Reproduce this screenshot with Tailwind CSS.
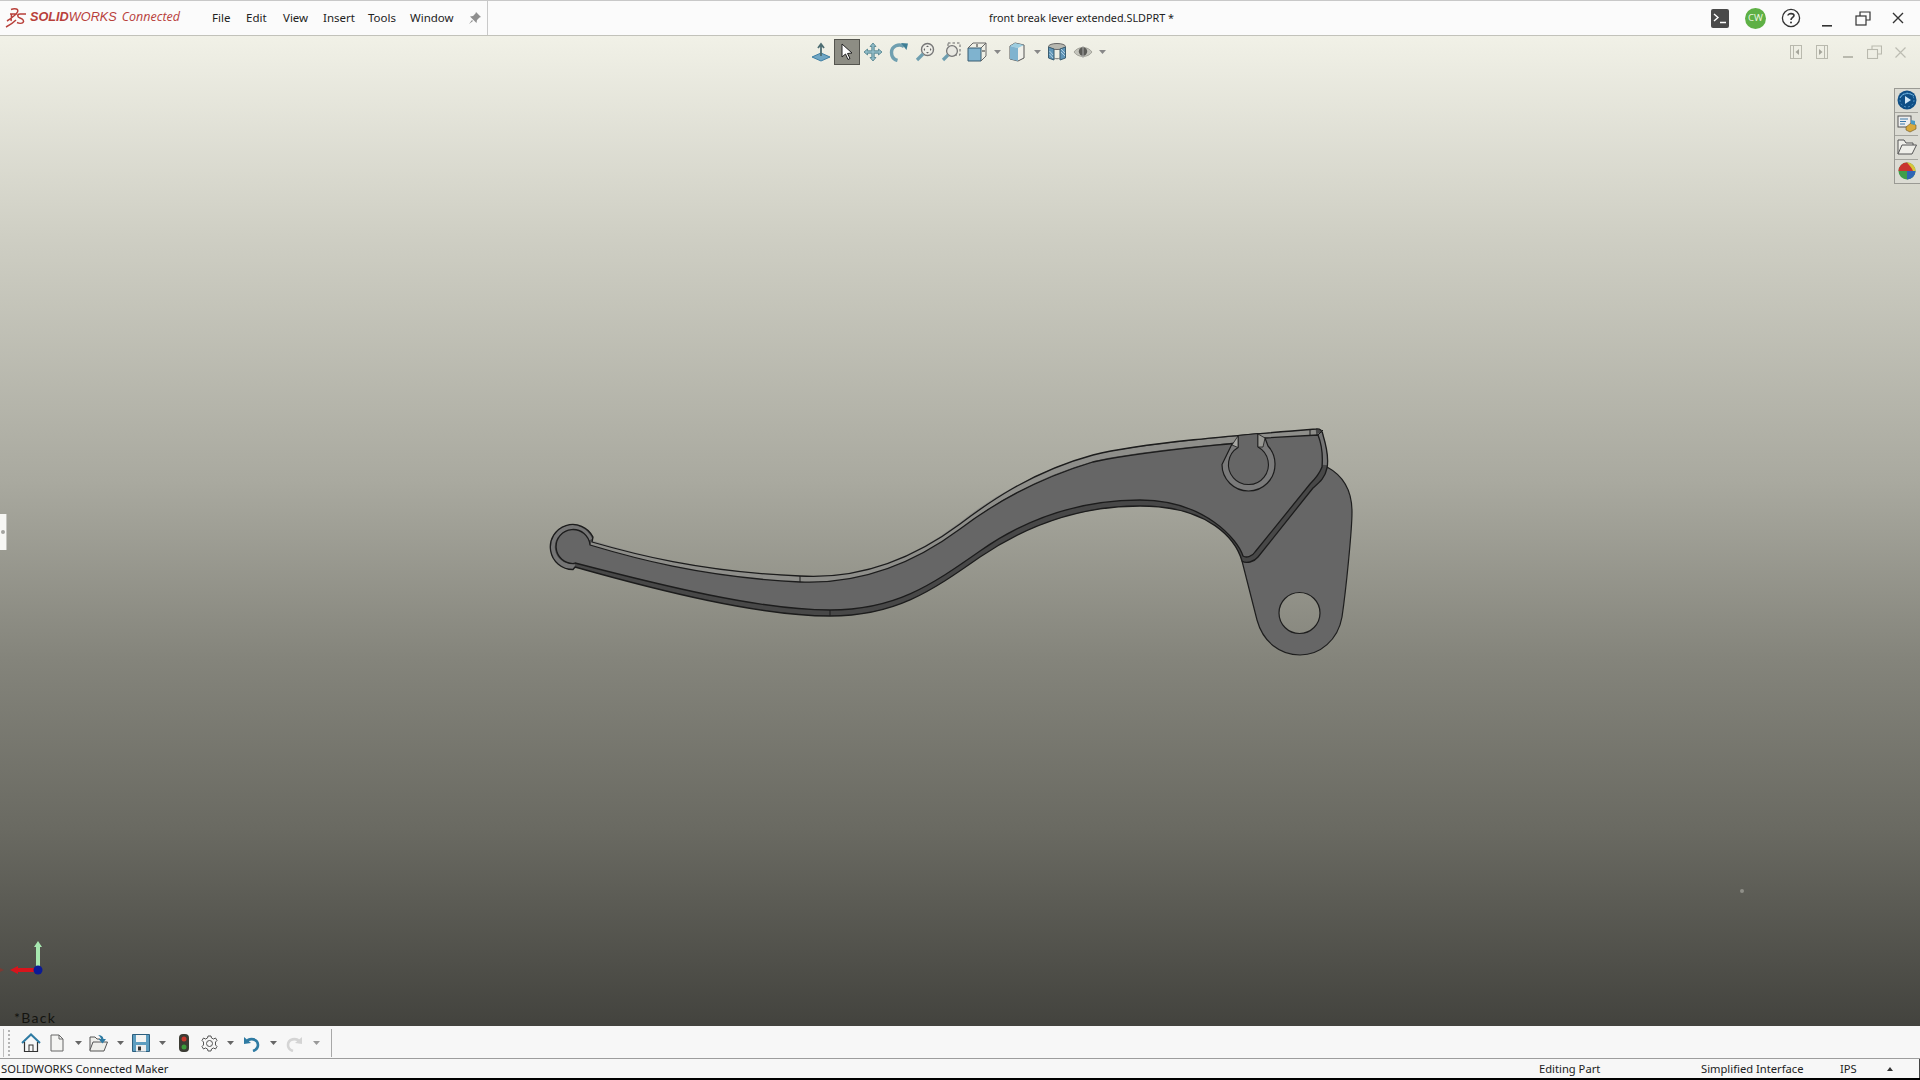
<!DOCTYPE html>
<html><head><meta charset="utf-8">
<script src="https://cdn.jsdelivr.net/npm/@tailwindcss/browser@4"></script>
</head>
<body class="bg-black overflow-hidden">
<div class="w-[1920px] h-[1080px] flex flex-col font-['Noto_Sans',sans-serif] text-[#222]">

<!-- title bar -->
<header class="h-[36px] shrink-0 relative flex items-center bg-[#fbfbfb] border-t border-t-[#c8c8c8] border-b border-b-[#c2c2ba]">
  <svg class="w-[22px] h-[22px] ml-[5px] shrink-0" viewBox="0 0 22 22" fill="none" stroke="#b8403a" stroke-width="1.5"><path d="M6 2.5 C10 1 14 2 12.5 5 C11.5 7 9 9.5 2 14 M5 7 L12 7 M6.5 7 C6.5 10 6.5 12 6 14 M1 20 C5 18 8 16 11 13 M21 7 L15 7 C12 7 12 10 15 11 C18 12 19.5 14 18 15.5 C17 16.5 14 16.5 12 15.5"/></svg>
  <div class="ml-[3px] w-[155px] shrink-0 text-[12.7px] italic text-[#b8403a] whitespace-nowrap font-['Liberation_Sans',sans-serif]"><span class="font-bold">SOLID</span><span>WORKS</span><span class="ml-[5px] font-['Open_Sans',sans-serif] text-[12.5px]">Connected</span></div>
  <nav class="flex text-[11.5px] text-[#222] ml-[27px] gap-[16px]">
    <span class="w-[18px]">File</span><span class="w-[21px]">Edit</span><span class="w-[24px]">View</span><span class="w-[29px]">Insert</span><span class="w-[26px]">Tools</span><span class="w-[44px]">Window</span>
  </nav>
  <svg class="w-[14px] h-[14px] ml-[14px] shrink-0" viewBox="0 0 14 14" fill="#8f8f8f"><path d="M8 1 L13 6 L11.5 6.5 L9 9 L8.5 12 L2 5.5 L5 5 L7.5 2.5 Z M4 9 L1 13 L5 10 Z"/></svg>
  <div class="w-px self-stretch ml-[5px] bg-[#c9c9c9]"></div>
  <div class="absolute left-0 right-0 top-0 bottom-0 flex items-center justify-center pointer-events-none pl-[243px] text-[10.8px]">front break lever extended.SLDPRT *</div>
  <div class="ml-auto flex items-center h-full relative">
    <div class="w-[18px] h-[19px] rounded-[2px] bg-[#4a4a4a] flex items-center justify-center">
      <svg class="w-[14px] h-[12px]" viewBox="0 0 14 12" fill="none" stroke="#fff" stroke-width="1.4"><path d="M1 2 L5 5.5 L1 9 M7 10.5 L13 10.5"/></svg>
    </div>
    <div class="ml-[16px] w-[21px] h-[21px] rounded-full bg-[#5eb045] flex items-center justify-center text-[9.5px] text-[#e6f5df]">CW</div>
    <svg class="ml-[15px] w-[20px] h-[20px]" viewBox="0 0 20 20" fill="none" stroke="#333" stroke-width="1.3"><circle cx="10" cy="10" r="8.6"/><path d="M7 7.5 C7 5 13 5 13 7.6 C13 9.5 10 9.5 10 12" stroke-width="1.6"/><circle cx="10" cy="14.6" r="1" fill="#333" stroke="none"/></svg>
    <svg class="ml-[20px] w-[12px] h-[12px] mt-[8px]" viewBox="0 0 12 12"><rect x="1" y="9" width="10" height="1.6" fill="#333"/></svg>
    <svg class="ml-[22px] w-[16px] h-[15px]" viewBox="0 0 16 15" fill="none" stroke="#333" stroke-width="1.2"><path d="M5 5 V1 H15 V9 H11"/><rect x="1" y="5" width="10" height="9"/></svg>
    <svg class="ml-[21px] mr-[16px] w-[12px] h-[12px]" viewBox="0 0 12 12" stroke="#333" stroke-width="1.4"><path d="M1 1 L11 11 M11 1 L1 11"/></svg>
  </div>
</header>

<!-- graphics area -->
<main class="flex-1 relative overflow-hidden bg-[linear-gradient(to_bottom,#f1f1e7_0%,#cfcfc4_20%,#a9a99f_45%,#84847b_63%,#6a6a62_80%,#43433e_100%)]">

  <!-- lever -->
  <svg class="absolute inset-0 w-full h-full" viewBox="0 36 1920 990" fill="none" stroke-linejoin="round">
    <!-- lug -->
    <path fill="#666666" fill-rule="evenodd" stroke="#1e1e1e" stroke-width="1.2" d="M1327 467 C1342 475 1352 490 1352 512 C1352 530 1346 590 1342 617 C1338 640 1320 655 1300 655 C1280 655 1263 642 1257 620 L1242 561 L1300 500 Z M1320 613 A20.5 20.5 0 1 0 1279 613 A20.5 20.5 0 1 0 1320 613 Z"/>
    <!-- body outer -->
    <path fill="#484848" d="M592 542 C630 553 700 572 800 576 C850 579 905 565 960 524 C985 505 1030 472 1093 455 C1140 443 1240 435 1316 429 Q1322 428 1323 435 C1326 445 1329 458 1327 468 C1325 478 1320 482 1313 488 L1258 557 C1254 562 1246 564 1242 561 C1236 540 1210 506 1140 506 C1085 506 1030 523 980 557 C930 592 895 616 830 616 C760 616 660 591 575 567 L573 569.5 A22.5 22.5 0 1 1 593 537 Z"/>
    <!-- bevel bands -->
    <path stroke="#8e8e8a" stroke-width="6" d="M591 543 C630 555 700 575 800 579 C850 581 905 568 960 526 C985 506 1030 476 1093 458 C1140 447 1240 439 1316 432"/>
    <path stroke="#757575" stroke-width="5" d="M1320 433 C1323 445 1326 455 1325 465"/>
    <path stroke="#757575" stroke-width="5" d="M575 566 L573 566.5 A19.5 19.5 0 1 1 590 540"/>
    <!-- outer stroke -->
    <path stroke="#1c1c1c" stroke-width="1.3" d="M592 542 C630 553 700 572 800 576 C850 579 905 565 960 524 C985 505 1030 472 1093 455 C1140 443 1240 435 1316 429 Q1322 428 1323 435 C1326 445 1329 458 1327 468 C1325 478 1320 482 1313 488 L1258 557 C1254 562 1246 564 1242 561 C1236 540 1210 506 1140 506 C1085 506 1030 523 980 557 C930 592 895 616 830 616 C760 616 660 591 575 567 L573 569.5 A22.5 22.5 0 1 1 593 537 Z"/>
    <!-- face -->
    <path fill="#666666" stroke="#1c1c1c" stroke-width="1.3" d="M590 545 C630 557 700 577 800 582 C850 584 905 570 960 529 C985 510 1030 481 1093 462 C1140 452 1200 447 1237 443 L1232 445 L1265 438 L1318 435 C1322 445 1323 455 1322 467 C1319 475 1315 479 1310 484 L1255 552 C1252 557 1246 558 1243 556 C1238 540 1205 500 1140 500 C1085 500 1030 516 980 551 C930 586 895 610 830 610 C760 610 660 585 575 563 L574 563.5 A17 17 0 1 1 590 545 Z"/>
    <!-- keyhole -->
    <path fill="#7a7a7a" stroke="#1c1c1c" stroke-width="1.2" d="M1222 464.5 A26.5 26.5 0 0 0 1275 464.5 A26.5 26.5 0 0 0 1268 446 L1265 438 L1232 444 Z"/>
    <path fill="#666666" stroke="#1c1c1c" stroke-width="1.1" d="M1238 447.5 A20 20 0 1 0 1258 447 L1258 433.5 L1238 435.5 Z"/>
    <path fill="#a8a8a4" stroke="#1c1c1c" stroke-width="0.8" d="M1238 436 L1232 445 L1238 447.5 Z"/>
    <path fill="#999994" stroke="#1c1c1c" stroke-width="0.8" d="M1258 434 L1265 438 L1263 447 L1258 447 Z"/>
    <!-- seams -->
    <path stroke="#1c1c1c" stroke-width="1" d="M800 576 V582 M830 610 V616 M1310 430 V435 M1318 435 L1323 430"/>
  </svg>

  <!-- heads-up toolbar -->
  <div class="absolute left-[808px] top-[3px] h-[26px] flex items-center">
    <div class="w-[26px] h-[26px] flex items-center justify-center"><svg class="w-[20px] h-[20px]" viewBox="0 0 20 20"><path d="M1 15 L10 11 L19 15 L10 19 Z" fill="#6fa6c4" stroke="#3f7fa3"/><path d="M10 14 V3 M7 6 L10 2 L13 6" fill="none" stroke="#4d6d72" stroke-width="1.8"/></svg></div>
    <div class="w-[26px] h-[26px] bg-[#8d8d84] border border-[#55554f] flex items-center justify-center"><svg class="w-[16px] h-[18px]" viewBox="0 0 16 18"><path d="M3 1 V14 L6.5 11 L9 16.5 L11 15.500 L8.500 10.500 L13 10 Z" fill="#fff" stroke="#222" stroke-width="1"/></svg></div>
    <div class="w-[26px] h-[26px] flex items-center justify-center"><svg class="w-[20px] h-[20px]" viewBox="0 0 20 20" fill="#8fbac6" stroke="#4a7d8a" stroke-width="0.8"><path d="M10 1 L13 4.5 H11.2 V8.8 H15.5 V7 L19 10 L15.5 13 V11.2 H11.2 V15.5 H13 L10 19 L7 15.5 H8.8 V11.2 H4.5 V13 L1 10 L4.5 7 V8.8 H8.8 V4.5 H7 Z"/></svg></div>
    <div class="w-[25px] h-[26px] flex items-center justify-center"><svg class="w-[20px] h-[20px]" viewBox="0 0 20 20" fill="none"><path d="M15 4.5 C10 1 2.5 4 2.5 10.5 C2.5 14.5 5 17.5 8.5 18.5" stroke="#6f9fb0" stroke-width="3.4"/><path d="M12 1 L19 1.5 L17.5 8 Z" fill="#3f7f96"/></svg></div>
    <div class="w-[27px] h-[26px] flex items-center justify-center"><svg class="w-[20px] h-[20px]" viewBox="0 0 20 20" fill="none"><circle cx="12.5" cy="7.5" r="6" stroke="#777" stroke-width="1.4" fill="#efefe8"/><path d="M8 12 L2 18" stroke="#6f9fb0" stroke-width="3.2"/><path d="M12.5 3.5 L11 5 H14 Z M12.5 11.5 L11 10 H14 Z M8.5 7.5 L10 6 V9 Z M16.5 7.5 L15 6 V9 Z" fill="#666"/></svg></div>
    <div class="w-[26px] h-[26px] flex items-center justify-center"><svg class="w-[20px] h-[20px]" viewBox="0 0 20 20" fill="none"><rect x="7" y="1" width="12" height="12" stroke="#666" stroke-dasharray="2.5 2"/><circle cx="11" cy="9" r="5.4" stroke="#777" stroke-width="1.3" fill="#e9e9e2"/><path d="M7 13 L2 18" stroke="#6f9fb0" stroke-width="3.2"/></svg></div>
    <div class="w-[26px] h-[26px] flex items-center justify-center"><svg class="w-[20px] h-[20px]" viewBox="0 0 20 20"><path d="M1 6 H14 V19 H1 Z" fill="#7fb3cf" stroke="#3b5d70"/><path d="M1 6 L6 1 H19 V14 L14 19 M14 6 L19 1" fill="none" stroke="#666"/><path d="M10 2 V5 M15 9 H18" stroke="#333"/></svg></div>
    <div class="w-[14px] h-[26px] flex items-center justify-center"><svg class="w-[7px] h-[4px]" viewBox="0 0 7 4"><path d="M0 0 H7 L3.5 4 Z" fill="#888"/></svg></div>
    <div class="w-[26px] h-[26px] flex items-center justify-center"><svg class="w-[18px] h-[20px]" viewBox="0 0 18 20"><path d="M2 4 L7 1 L16 3 V16 L10 19 L2 17 Z" fill="#f0f0ea" stroke="#555"/><path d="M2 4 L7 1 L16 3 L10 6 Z" fill="#9ccde0"/><path d="M2 4 L10 6 V19 L2 17 Z" fill="#7fb3cf"/></svg></div>
    <div class="w-[14px] h-[26px] flex items-center justify-center"><svg class="w-[7px] h-[4px]" viewBox="0 0 7 4"><path d="M0 0 H7 L3.5 4 Z" fill="#888"/></svg></div>
    <div class="w-[26px] h-[26px] flex items-center justify-center"><svg class="w-[20px] h-[20px]" viewBox="0 0 20 20"><ellipse cx="10" cy="4.500" rx="8.500" ry="3" fill="#b8b8b0" stroke="#666"/><path d="M1.500 5 L7 7 V18 L1.500 16 Z M18.500 5 L13 7 V18 L18.500 16 Z" fill="#5f95b8" stroke="#3b5d70"/><path d="M2.500 9 L6 13 M2.500 12 L6 16 M14 10 L18 14 M14 7 L18 11" stroke="#c7dce8" stroke-width=".8"/><path d="M7 16 C9 17 11 17 13 16" stroke="#777" fill="none"/></svg></div>
    <div class="w-[26px] h-[26px] flex items-center justify-center"><svg class="w-[20px] h-[18px]" viewBox="0 0 20 18"><path d="M1 9 C5 3 15 3 19 9 C15 15 5 15 1 9 Z" fill="#c4c4bc" stroke="#a5a59c"/><circle cx="10" cy="8.500" r="4.200" fill="#5c5c58"/><path d="M10 3 V15" stroke="#aaa" stroke-width="1"/></svg></div>
    <div class="w-[12px] h-[26px] flex items-center justify-center"><svg class="w-[7px] h-[4px]" viewBox="0 0 7 4"><path d="M0 0 H7 L3.5 4 Z" fill="#888"/></svg></div>
  </div>

  <!-- document window controls -->
  <div class="absolute left-[1790px] top-[9px] flex items-center">
    <svg class="w-[12px] h-[14px]" viewBox="0 0 12 14" fill="none" stroke="#b9b9ae" stroke-width="1"><rect x=".5" y=".5" width="11" height="13"/><path d="M3.5 .5 V13.5" /><path d="M9 4 L5.5 7 L9 10 Z" fill="#a5a59b" stroke="none"/></svg>
    <svg class="ml-[14px] w-[12px] h-[14px]" viewBox="0 0 12 14" fill="none" stroke="#b9b9ae" stroke-width="1"><rect x=".5" y=".5" width="11" height="13"/><path d="M8.5 .5 V13.5"/><path d="M3 4 L6.5 7 L3 10 Z" fill="#a5a59b" stroke="none"/></svg>
    <svg class="ml-[15px] w-[10px] h-[14px]" viewBox="0 0 10 14"><rect y="11" width="10" height="2" fill="#b9b9ae"/></svg>
    <svg class="ml-[14px] w-[15px] h-[14px]" viewBox="0 0 15 14" fill="none" stroke="#b9b9ae" stroke-width="1.1"><path d="M5 4 V1 H14.500 V9 H10"/><rect x=".5" y="4.500" width="10" height="9"/></svg>
    <svg class="ml-[13px] w-[11px] h-[11px]" viewBox="0 0 11 11" stroke="#bcbcb2" stroke-width="1.2"><path d="M.5 .5 L10.500 10.500 M10.500 .5 L.5 10.500"/></svg>
  </div>

  <!-- task pane tabs -->
  <div class="absolute right-0 top-[52px] w-[26px] pr-[2px] flex flex-col border border-r-0 border-[#9a9a94] divide-y divide-[#a5a59e] bg-[#dcdcd4]">
    <div class="h-[23.5px] flex items-center justify-center"><svg class="w-[20px] h-[20px]" viewBox="0 0 20 20"><circle cx="10" cy="10" r="9.500" fill="#0f4f86"/><circle cx="10" cy="10" r="7" fill="none" stroke="#5fa5d4" stroke-width=".8" stroke-dasharray="2 2"/><path d="M8 6 L14 10 L8 14 Z" fill="#cfe6f5"/><path d="M3 8 C5 3 13 2 17 6" stroke="#6db0dc" fill="none"/></svg></div>
    <div class="h-[23.5px] flex items-center justify-center"><svg class="w-[20px] h-[18px]" viewBox="0 0 20 18"><rect x="1" y="1" width="13" height="11" fill="#eee" stroke="#555"/><path d="M3 4 H11 M3 6.500 H9 M3 9 H8" stroke="#3a78a8"/><path d="M9 12 L14 8 L19 10 L19 14 L13 17 L9 15 Z" fill="#d8a93c" stroke="#6b5520" stroke-width=".6"/><path d="M14 5 L18 6 V10 L14 9 Z" fill="#4a9bc4"/></svg></div>
    <div class="h-[23.5px] flex items-center justify-center"><svg class="w-[20px] h-[18px]" viewBox="0 0 20 18" fill="#efefe9" stroke="#555" stroke-width="1"><path d="M1 16 V2 H7 L9 5 H16 V7"/><path d="M1 16 L5 7 H19.500 L15 16 Z"/></svg></div>
    <div class="h-[23.5px] flex items-center justify-center"><svg class="w-[18px] h-[18px]" viewBox="0 0 18 18"><circle cx="9" cy="9" r="8.500" fill="#3f9e4a"/><path d="M9 .5 A8.500 8.500 0 0 1 17.500 9 H9 Z" fill="#d8c53a"/><path d="M.5 9 A8.500 8.500 0 0 1 9 .5 C12 4 14 6 15 9 Z" fill="#c9342f"/><path d="M9 9 H17.500 A8.500 8.500 0 0 1 9 17.500 Z" fill="#2f65b5"/></svg></div>
  </div>

  <!-- left splitter handle -->
  <div class="absolute left-0 top-[478px] w-[7px] h-[36px] bg-[#f7f7f4] border-r border-[#c5c5bf] flex items-center justify-center"><span class="w-[4px] h-[4px] rounded-full bg-[#a5a5a0]"></span></div>

  <!-- stray cursor dot -->
  <span class="absolute left-[1740px] top-[853px] w-[4px] h-[4px] rounded-full bg-[#8f8f88]"></span>

  <!-- triad -->
  <svg class="absolute left-0 top-[902px] w-[50px] h-[42px]" viewBox="0 0 50 42">
    <path d="M36 34 V9 H34 L38 3 L42 9 H40 V34 Z" fill="#a7e8b0"/>
    <path d="M38 30 H18 V28 L10 32 L18 36 V34 H38 Z" fill="#d8141c"/>
    <path d="M0 30 L4 32 L0 34 Z" fill="#7d3a33"/>
    <circle cx="38" cy="32" r="4.500" fill="#0b1a96"/>
  </svg>

  <div class="absolute left-[14px] top-[973px] text-[14px] tracking-[1.3px] text-[#141410] font-['Lato',sans-serif] leading-[18px]">*Back</div>
</main>

<!-- bottom toolbar -->
<div class="h-[33px] shrink-0 bg-[#f7f7f7] flex items-center border-b border-[#9d9d9d] pt-[2px]">
  <div class="w-px h-[28px] ml-[3px] bg-[#bdbdbd]"></div>
  <div class="w-[3px] h-[26px] ml-[4px] border-l-2 border-dotted border-[#b5b5b5]"></div>
  <svg class="ml-[10px] w-[20px] h-[20px]" viewBox="0 0 20 20" fill="none"><path d="M1 10 L10 1.500 L19 10" stroke="#2f7ba3" stroke-width="2"/><path d="M3.500 9 V18.500 H16.500 V9" stroke="#333" stroke-width="1.2"/><rect x="8" y="12" width="4" height="6.500" stroke="#333"/></svg>
  <svg class="ml-[9px] w-[14px] h-[18px]" viewBox="0 0 14 18" fill="#f4f4f2" stroke="#666"><path d="M1 1 H9 L13 5 V17 H1 Z"/><path d="M9 1 V5 H13" fill="none"/></svg>
  <div class="ml-[11px] w-[7px]"><svg class="w-[7px] h-[4px]" viewBox="0 0 7 4"><path d="M0 0 H7 L3.500 4 Z" fill="#666"/></svg></div>
  <svg class="ml-[7px] w-[20px] h-[18px]" viewBox="0 0 20 18" fill="#eeeeea" stroke="#555"><path d="M1 16 V3 H6 L8 5 H11"/><path d="M1 16 L4 8 H18.500 L15 17 H1 Z"/><path d="M9 1 C12 1 14 2 14.500 5 H17 L13.500 9.500 L9.500 5 H12 C11.500 3 10.500 2 9 1 Z" fill="#2f7ba3" stroke="none"/></svg>
  <div class="ml-[8px] w-[7px]"><svg class="w-[7px] h-[4px]" viewBox="0 0 7 4"><path d="M0 0 H7 L3.500 4 Z" fill="#666"/></svg></div>
  <svg class="ml-[8px] w-[18px] h-[18px]" viewBox="0 0 18 18"><path d="M.5 .5 H17.500 V17.500 H.5 Z" fill="#5d9dc0" stroke="#2d5f7e"/><rect x="4" y="1" width="10" height="7" fill="#f4f4f2"/><rect x="4" y="11" width="10" height="6.500" fill="#eee"/><rect x="6" y="12.500" width="3" height="4" fill="#333"/></svg>
  <div class="ml-[9px] w-[7px]"><svg class="w-[7px] h-[4px]" viewBox="0 0 7 4"><path d="M0 0 H7 L3.500 4 Z" fill="#666"/></svg></div>
  <svg class="ml-[13px] w-[10px] h-[18px]" viewBox="0 0 10 18"><rect width="10" height="18" rx="4" fill="#3c3c34"/><circle cx="5" cy="5" r="2.500" fill="#c7382d"/><circle cx="5" cy="13" r="2.500" fill="#3d9b3b"/></svg>
  <svg class="ml-[12px] w-[17px] h-[17px]" viewBox="0 0 17 17" fill="none" stroke="#555"><circle cx="8.500" cy="8.500" r="3"/><path d="M7 1 H10 L10.500 3 L12.500 4 L14.500 3 L16 5.500 L14.500 7 V10 L16 11.500 L14.500 14 L12.500 13 L10.500 14 L10 16 H7 L6.500 14 L4.500 13 L2.500 14 L1 11.500 L2.500 10 V7 L1 5.500 L2.500 3 L4.500 4 L6.500 3 Z"/></svg>
  <div class="ml-[9px] w-[7px]"><svg class="w-[7px] h-[4px]" viewBox="0 0 7 4"><path d="M0 0 H7 L3.500 4 Z" fill="#666"/></svg></div>
  <svg class="ml-[9px] w-[17px] h-[17px]" viewBox="0 0 17 17" fill="none"><path d="M3 7 C7 2 15 4 15 10 C15 13 13 15 10 16" stroke="#2f7ba3" stroke-width="2.600"/><path d="M1 2 L1 9 L8 8 Z" fill="#2f7ba3"/></svg>
  <div class="ml-[10px] w-[7px]"><svg class="w-[7px] h-[4px]" viewBox="0 0 7 4"><path d="M0 0 H7 L3.500 4 Z" fill="#666"/></svg></div>
  <svg class="ml-[9px] w-[17px] h-[17px]" viewBox="0 0 17 17" fill="none"><path d="M14 7 C10 2 2 4 2 10 C2 13 4 15 7 16" stroke="#d4d4d4" stroke-width="2.600"/><path d="M16 2 L16 9 L9 8 Z" fill="#d4d4d4"/></svg>
  <div class="ml-[10px] w-[7px]"><svg class="w-[7px] h-[4px]" viewBox="0 0 7 4"><path d="M0 0 H7 L3.500 4 Z" fill="#999"/></svg></div>
  <div class="w-px h-[28px] ml-[11px] bg-[#a8a8a8]"></div>
</div>

<!-- status bar -->
<footer class="h-[19px] shrink-0 bg-[#f7f7f7] flex items-center text-[11.2px] text-[#222] pl-px pt-[1px] border-r border-[#444]">
  <span>SOLIDWORKS Connected Maker</span>
  <span class="ml-auto w-[162px]">Editing Part</span>
  <span class="w-[139px]">Simplified Interface</span>
  <span class="w-[47px]">IPS</span>
  <svg class="w-[6px] h-[4px] mr-[26px]" viewBox="0 0 6 4"><path d="M0 4 H6 L3 0 Z" fill="#333"/></svg>
</footer>
<div class="h-[2px] shrink-0 bg-black"></div>
</div>
</body></html>
